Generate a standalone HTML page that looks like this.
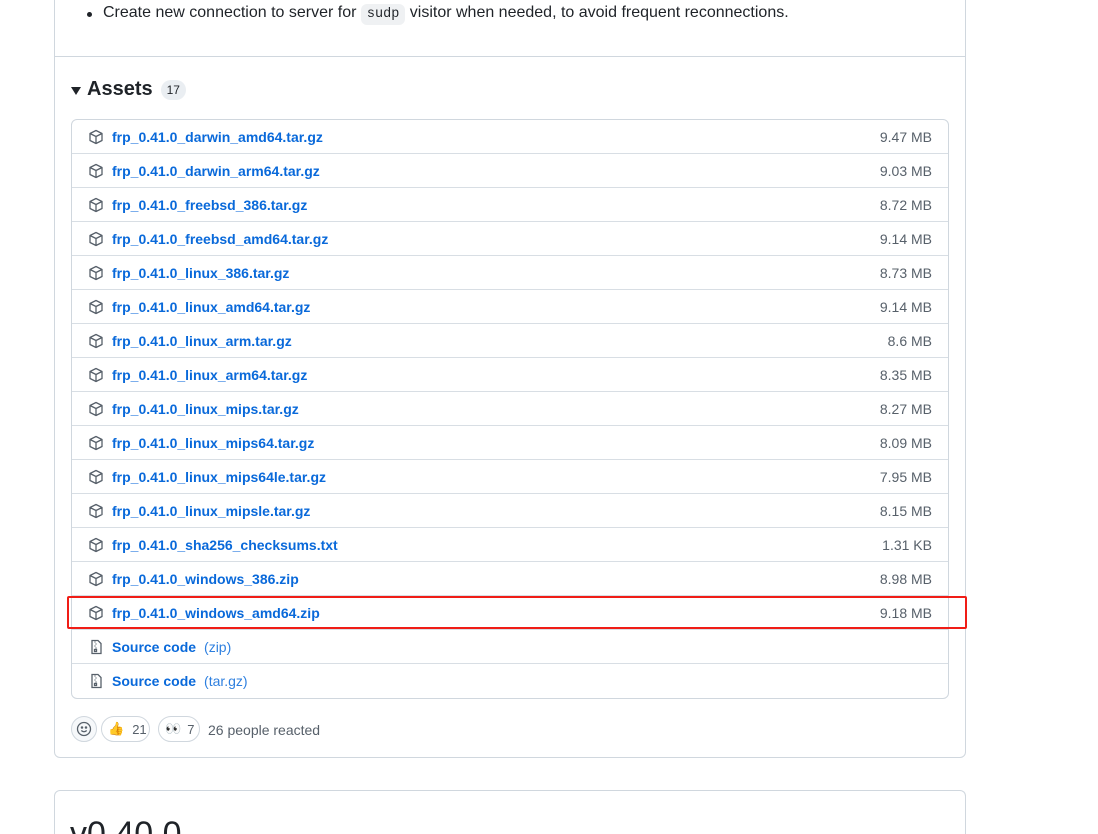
<!DOCTYPE html>
<html style="height:834px;overflow:hidden"><head><meta charset="utf-8"><style>
*{box-sizing:border-box;margin:0;padding:0}
body{width:1098px;height:834px;overflow:hidden;background:#fff;font-family:"Liberation Sans",Arial,sans-serif;color:#1f2328;position:relative}
.card{position:absolute;left:54px;width:912px;border:1px solid #d0d7de;border-radius:6px}
.c1{top:-10px;height:768px}
.c2{top:790px;height:44px;border-bottom:none;border-radius:6px 6px 0 0;overflow:hidden}
.sep{position:absolute;left:55px;width:910px;top:56px;height:1px;background:#d0d7de}
.bullet{position:absolute;left:103px;top:4px;font-size:16px}
.bullet:before{content:"";position:absolute;left:-16px;top:8px;width:5px;height:5px;border-radius:50%;background:#1f2328}
code{font-family:"Liberation Mono",monospace;font-size:13.5px;background:#eff1f3;border-radius:6px;padding:3px 6px}
.ah{position:absolute;left:71px;top:78px;font-size:20px;font-weight:600;display:flex;align-items:center}
.tri{width:0;height:0;border-left:5px solid transparent;border-right:5px solid transparent;border-top:8px solid #1f2328;margin-right:6px;margin-top:2px}
.cnt{font-size:12px;font-weight:500;background:#eaeef2;border-radius:10px;padding:3px 6px;margin-left:8px}
.list{position:absolute;left:71px;top:119px;width:878px;height:580px;border:1px solid #d0d7de;border-radius:6px;overflow:hidden}
.row{height:34px;border-top:1px solid #d8dee4;display:flex;align-items:center;padding-left:16px;font-size:14px;position:relative}
.row:first-child{border-top:none;height:33px}
.row a{color:#0969da;text-decoration:none;font-weight:600;margin-left:8px}
.row .g{color:#0969da;margin-left:8px;opacity:.85}
.sz{position:absolute;right:16px;color:#57606a;font-size:14px}
.red{position:absolute;left:67px;top:596px;width:900px;height:33px;border:2px solid #f01d16;border-radius:2px}
.re{position:absolute;top:716px;height:26px;border:1px solid #d0d7de;border-radius:13px;display:flex;align-items:center;font-size:13px;color:#57606a}
.ppl{position:absolute;left:208px;top:722px;font-size:14px;color:#57606a}
.ver{position:absolute;left:15px;top:24px;font-size:34px;font-weight:400}
</style></head><body>
<div class="card c1"></div>
<div class="sep"></div>
<div class="bullet">Create new connection to server for <code>sudp</code> visitor when needed, to avoid frequent reconnections.</div>
<div class="ah"><span class="tri"></span>Assets<span class="cnt">17</span></div>
<div class="list">
<div class="row"><svg width="16" height="16" viewBox="0 0 16 16" fill="none" stroke="#57606a" stroke-width="1.3" stroke-linejoin="round"><path d="M8 1.5 14 4.5V11.5L8 14.5 2 11.5V4.5Z M2 4.5 8 7.5 14 4.5 M8 7.5V14.5"/></svg><a>frp_0.41.0_darwin_amd64.tar.gz</a><span class="sz">9.47 MB</span></div>
<div class="row"><svg width="16" height="16" viewBox="0 0 16 16" fill="none" stroke="#57606a" stroke-width="1.3" stroke-linejoin="round"><path d="M8 1.5 14 4.5V11.5L8 14.5 2 11.5V4.5Z M2 4.5 8 7.5 14 4.5 M8 7.5V14.5"/></svg><a>frp_0.41.0_darwin_arm64.tar.gz</a><span class="sz">9.03 MB</span></div>
<div class="row"><svg width="16" height="16" viewBox="0 0 16 16" fill="none" stroke="#57606a" stroke-width="1.3" stroke-linejoin="round"><path d="M8 1.5 14 4.5V11.5L8 14.5 2 11.5V4.5Z M2 4.5 8 7.5 14 4.5 M8 7.5V14.5"/></svg><a>frp_0.41.0_freebsd_386.tar.gz</a><span class="sz">8.72 MB</span></div>
<div class="row"><svg width="16" height="16" viewBox="0 0 16 16" fill="none" stroke="#57606a" stroke-width="1.3" stroke-linejoin="round"><path d="M8 1.5 14 4.5V11.5L8 14.5 2 11.5V4.5Z M2 4.5 8 7.5 14 4.5 M8 7.5V14.5"/></svg><a>frp_0.41.0_freebsd_amd64.tar.gz</a><span class="sz">9.14 MB</span></div>
<div class="row"><svg width="16" height="16" viewBox="0 0 16 16" fill="none" stroke="#57606a" stroke-width="1.3" stroke-linejoin="round"><path d="M8 1.5 14 4.5V11.5L8 14.5 2 11.5V4.5Z M2 4.5 8 7.5 14 4.5 M8 7.5V14.5"/></svg><a>frp_0.41.0_linux_386.tar.gz</a><span class="sz">8.73 MB</span></div>
<div class="row"><svg width="16" height="16" viewBox="0 0 16 16" fill="none" stroke="#57606a" stroke-width="1.3" stroke-linejoin="round"><path d="M8 1.5 14 4.5V11.5L8 14.5 2 11.5V4.5Z M2 4.5 8 7.5 14 4.5 M8 7.5V14.5"/></svg><a>frp_0.41.0_linux_amd64.tar.gz</a><span class="sz">9.14 MB</span></div>
<div class="row"><svg width="16" height="16" viewBox="0 0 16 16" fill="none" stroke="#57606a" stroke-width="1.3" stroke-linejoin="round"><path d="M8 1.5 14 4.5V11.5L8 14.5 2 11.5V4.5Z M2 4.5 8 7.5 14 4.5 M8 7.5V14.5"/></svg><a>frp_0.41.0_linux_arm.tar.gz</a><span class="sz">8.6 MB</span></div>
<div class="row"><svg width="16" height="16" viewBox="0 0 16 16" fill="none" stroke="#57606a" stroke-width="1.3" stroke-linejoin="round"><path d="M8 1.5 14 4.5V11.5L8 14.5 2 11.5V4.5Z M2 4.5 8 7.5 14 4.5 M8 7.5V14.5"/></svg><a>frp_0.41.0_linux_arm64.tar.gz</a><span class="sz">8.35 MB</span></div>
<div class="row"><svg width="16" height="16" viewBox="0 0 16 16" fill="none" stroke="#57606a" stroke-width="1.3" stroke-linejoin="round"><path d="M8 1.5 14 4.5V11.5L8 14.5 2 11.5V4.5Z M2 4.5 8 7.5 14 4.5 M8 7.5V14.5"/></svg><a>frp_0.41.0_linux_mips.tar.gz</a><span class="sz">8.27 MB</span></div>
<div class="row"><svg width="16" height="16" viewBox="0 0 16 16" fill="none" stroke="#57606a" stroke-width="1.3" stroke-linejoin="round"><path d="M8 1.5 14 4.5V11.5L8 14.5 2 11.5V4.5Z M2 4.5 8 7.5 14 4.5 M8 7.5V14.5"/></svg><a>frp_0.41.0_linux_mips64.tar.gz</a><span class="sz">8.09 MB</span></div>
<div class="row"><svg width="16" height="16" viewBox="0 0 16 16" fill="none" stroke="#57606a" stroke-width="1.3" stroke-linejoin="round"><path d="M8 1.5 14 4.5V11.5L8 14.5 2 11.5V4.5Z M2 4.5 8 7.5 14 4.5 M8 7.5V14.5"/></svg><a>frp_0.41.0_linux_mips64le.tar.gz</a><span class="sz">7.95 MB</span></div>
<div class="row"><svg width="16" height="16" viewBox="0 0 16 16" fill="none" stroke="#57606a" stroke-width="1.3" stroke-linejoin="round"><path d="M8 1.5 14 4.5V11.5L8 14.5 2 11.5V4.5Z M2 4.5 8 7.5 14 4.5 M8 7.5V14.5"/></svg><a>frp_0.41.0_linux_mipsle.tar.gz</a><span class="sz">8.15 MB</span></div>
<div class="row"><svg width="16" height="16" viewBox="0 0 16 16" fill="none" stroke="#57606a" stroke-width="1.3" stroke-linejoin="round"><path d="M8 1.5 14 4.5V11.5L8 14.5 2 11.5V4.5Z M2 4.5 8 7.5 14 4.5 M8 7.5V14.5"/></svg><a>frp_0.41.0_sha256_checksums.txt</a><span class="sz">1.31 KB</span></div>
<div class="row"><svg width="16" height="16" viewBox="0 0 16 16" fill="none" stroke="#57606a" stroke-width="1.3" stroke-linejoin="round"><path d="M8 1.5 14 4.5V11.5L8 14.5 2 11.5V4.5Z M2 4.5 8 7.5 14 4.5 M8 7.5V14.5"/></svg><a>frp_0.41.0_windows_386.zip</a><span class="sz">8.98 MB</span></div>
<div class="row"><svg width="16" height="16" viewBox="0 0 16 16" fill="none" stroke="#57606a" stroke-width="1.3" stroke-linejoin="round"><path d="M8 1.5 14 4.5V11.5L8 14.5 2 11.5V4.5Z M2 4.5 8 7.5 14 4.5 M8 7.5V14.5"/></svg><a>frp_0.41.0_windows_amd64.zip</a><span class="sz">9.18 MB</span></div>
<div class="row"><svg width="16" height="16" viewBox="0 0 16 16" fill="none" stroke="#57606a" stroke-width="1.3"><path d="M4 1.5H10L13 4.5V14.5H4Z M7 2.5V3.5 M8 4.5V5.5 M7 6.5V7.5 M8 8.5V9.5"/><rect x="6.5" y="10.5" width="2" height="2"/></svg><a>Source code</a><span class="g">(zip)</span></div>
<div class="row"><svg width="16" height="16" viewBox="0 0 16 16" fill="none" stroke="#57606a" stroke-width="1.3"><path d="M4 1.5H10L13 4.5V14.5H4Z M7 2.5V3.5 M8 4.5V5.5 M7 6.5V7.5 M8 8.5V9.5"/><rect x="6.5" y="10.5" width="2" height="2"/></svg><a>Source code</a><span class="g">(tar.gz)</span></div>
</div>
<div class="red"></div>
<div class="re" style="left:71px;width:26px;justify-content:center;background:#f6f8fa"><svg width="16" height="16" viewBox="0 0 16 16" fill="none" stroke="#57606a" stroke-width="1.3"><circle cx="8" cy="8" r="6.5"/><circle cx="6" cy="6.5" r=".6" fill="#57606a"/><circle cx="10" cy="6.5" r=".6" fill="#57606a"/><path d="M5.3 9.5Q8 12 10.7 9.5"/></svg></div>
<div class="re" style="left:101px;width:49px;padding-left:6px">👍<span style="margin-left:8px">21</span></div>
<div class="re" style="left:158px;width:42px;padding-left:6px">👀<span style="margin-left:6px">7</span></div>
<div class="ppl">26 people reacted</div>
<div class="card c2"><div class="ver">v0.40.0</div></div>
</body></html>
